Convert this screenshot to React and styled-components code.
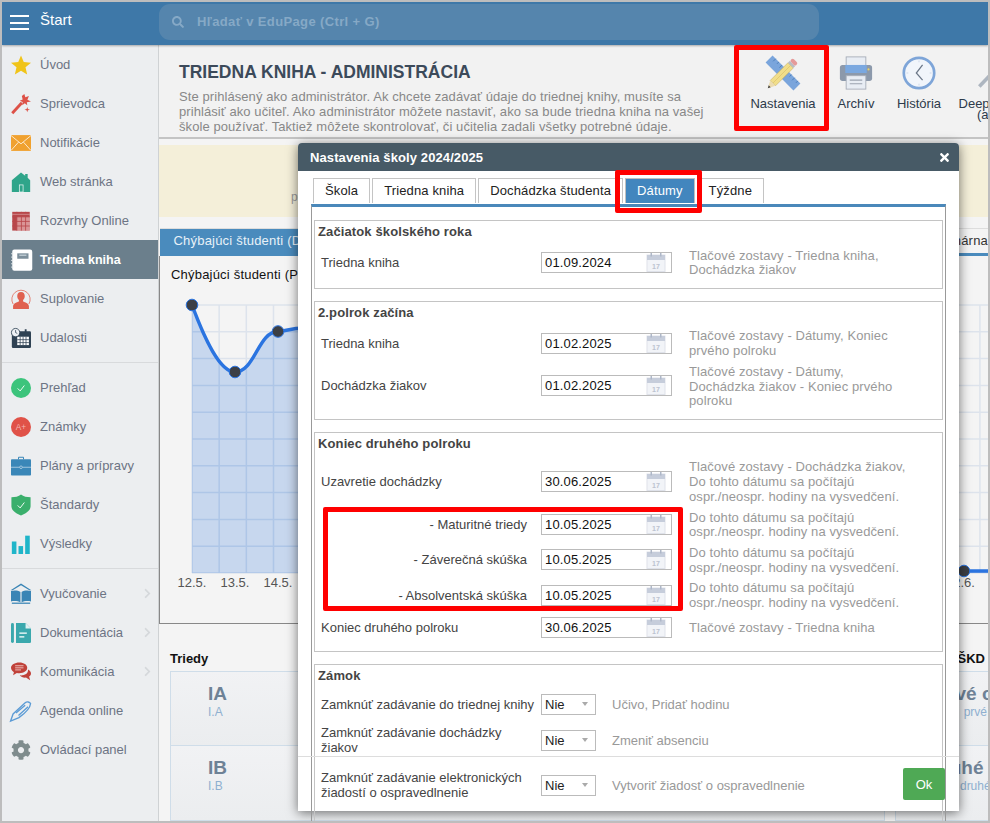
import React from "react";
import styled, { createGlobalStyle } from "styled-components";
import { FaSearch, FaTimes, FaCog, FaChevronRight } from "react-icons/fa";

const Global = createGlobalStyle`
  html, body { margin: 0; padding: 0; background: #fff; }
  * { box-sizing: border-box; }
  body { font-family: "Liberation Sans", Arial, sans-serif; }
`;

const Screen = styled.div`
  position: relative; width: 990px; height: 823px; border: 2px solid #bdbdbd;
  overflow: hidden; background: #f4f4f4; display: flex; flex-direction: column;
`;
const TopBar = styled.header`
  height: 43px; flex: none; background: #3e78a8; display: flex; align-items: center;
  padding-left: 8px; position: relative; z-index: 2; box-shadow: 0 1px 2px rgba(0,0,0,.3);
`;
const Burger = styled.div`
  width: 19px; height: 15px; display: flex; flex-direction: column; justify-content: space-between; margin: -2px 11px 0 0;
  i { display: block; height: 2px; background: #fff; }
`;
const StartLabel = styled.span`
  color: #fff; font-size: 15px; width: 119px; margin-top: -8px;
`;
const SearchBox = styled.div`
  width: 660px; height: 36px; background: #5585ad; border-radius: 11px; display: flex; align-items: center;
  padding-left: 13px; gap: 13px; color: #86a9c6; font-size: 13px; letter-spacing: .37px; font-weight: 700; margin-top: -4px;
`;
const Body = styled.div`
  flex: 1; display: flex; min-height: 0;
`;
const Sidebar = styled.nav`
  width: 157px; flex: none; background: #eceef0; border-right: 1px solid #cfd2d4;
`;
const NavGroup = styled.div`
  padding: ${p => (p.$first ? "0 0 5px" : "5px 0")};
  border-bottom: ${p => (p.$last ? "none" : "1px solid #d8dadc")};
`;
const NavItem = styled.div`
  height: 39px; display: flex; align-items: center; padding-left: 9px; gap: 9px; position: relative;
  background: ${p => (p.$active ? "#6b7f8c" : "transparent")};
  color: ${p => (p.$active ? "#fff" : "#6d7484")};
  font-weight: ${p => (p.$active ? 700 : 400)};
  font-size: ${p => (p.$active ? "12.5px" : "13px")};
  svg.ic { width: 20px; height: 20px; flex: none; overflow: visible; }
`;
const Chevron = styled.span`
  position: absolute; right: 5px; top: 14px; color: #d5d8db; font-size: 11px; line-height: 1;
`;
const Main = styled.main`
  flex: 1; min-width: 0; display: flex; flex-direction: column; overflow: hidden;
`;
const PageHead = styled.section`
  height: 94px; flex: none; display: flex; background: #f2f2f2; border-bottom: 2px solid #c4c4c4; padding-left: 20px;
`;
const HeadText = styled.div`
  width: 568px; flex: none; padding-top: 17px;
`;
const PageTitle = styled.h1`
  margin: 0 0 7px; font-size: 17.5px; line-height: 20px; font-weight: 700; color: #3c4a5a;
`;
const PageDesc = styled.p`
  margin: 0; font-size: 13px; line-height: 15px; color: #888; letter-spacing: .08px; white-space: nowrap;
`;
const Toolbar = styled.div`
  display: flex; flex: none;
`;
const ToolItem = styled.div`
  width: ${p => p.$w}px; flex: none; display: flex; flex-direction: column; align-items: center; padding-top: 11px;
  font-size: 13px; line-height: 11px; color: #2d3a4a; text-align: center; white-space: nowrap;
  svg { width: 34px; height: 34px; margin-bottom: 8px; flex: none; overflow: visible; }
`;
const Banner = styled.div`
  height: 72px; flex: none; margin-top: 6px; background: #f4efd9; padding: 45px 0 0 132px; font-size: 12px; color: #999;
  white-space: nowrap; overflow: hidden;
`;
const TabRow = styled.div`
  height: 28px; flex: none; margin-top: 11px; display: flex; justify-content: space-between; border-top: 1px solid #ddd;
  border-bottom: 3px solid #4a8bbd; margin-left: 1px; font-size: 13px; letter-spacing: .2px;
`;
const ChartTab = styled.div`
  background: #4a8bbd; color: #e8f1f8; padding: 0 14px 0 13.5px; width: 300px; white-space: nowrap; overflow: hidden; line-height: 24px;
`;
const ChartTabRight = styled.div`
  color: #333; line-height: 24px; white-space: nowrap; width: 30px; overflow: hidden; text-align: right; direction: rtl;
`;
const ChartCard = styled.div`
  height: 368px; flex: none; border-left: 1px solid #888; border-bottom: 1px solid #888;
  svg { display: block; }
`;
const ChartTitle = styled.div`
  height: 34px; padding: 11px 0 0 11px; font-size: 13px; letter-spacing: .2px; line-height: 15px; color: #111; white-space: nowrap;
`;
const Lower = styled.div`
  flex: 1; display: flex; padding-left: 11px; gap: 10px; margin: 26px -135px 0 0; min-height: 0;
`;
const LowerCol = styled.div`
  flex: ${p => (p.$wide ? "1" : "none")}; width: ${p => (p.$wide ? "auto" : "228px")}; min-width: 0;
`;
const LowerTitle = styled.div`
  font-size: 13px; font-weight: 700; color: #111; line-height: 15px; height: 21px; padding-top: 1px; white-space: nowrap;
  margin-left: ${p => p.$shift || 0}px;
`;
const ClassCard = styled.div`
  height: 75px; border: 1px solid #cfdde9; border-top: ${p => (p.$first ? "1px solid #cfdde9" : "none")};
  background: linear-gradient(#f1f2f4, #ebedef); padding: 11px ${p => p.$padR || 0}px 0 ${p => p.$pad || 0}px; white-space: nowrap;
  text-align: ${p => (p.$center ? "center" : "left")};
`;
const ClassName = styled.div`
  font-size: 19px; line-height: 21px; font-weight: 700; color: #6e8296;
`;
const ClassSub = styled.div`
  font-size: 12px; line-height: 15px; color: #8fb0d0; margin-top: 1px;
`;

const Modal = styled.div`
  position: absolute; left: 296px; top: 141px; width: 661px; height: 668px; background: #fff; border-radius: 4px 4px 0 0;
  box-shadow: 0 2px 12px rgba(0,0,0,.55); z-index: 5; display: flex; flex-direction: column;
`;
const ModalHead = styled.div`
  height: 28px; flex: none; background: #475a66; border-radius: 4px 4px 0 0; display: flex; align-items: center; justify-content: space-between;
  padding: 0 8px 0 12px; color: #fff; font-weight: 700; font-size: 13px; letter-spacing: .1px;
`;
const Tabs = styled.div`
  display: flex; gap: 2px; padding: 7px 0 0 15px; flex: none;
`;
const Tab = styled.div`
  height: 25px; padding: 0 11px; line-height: 23px; font-size: 13px; letter-spacing: .13px; color: ${p => (p.$active ? "#fff" : "#222")};
  background: ${p => (p.$active ? "#4286be" : "#fff")}; border: 1px solid ${p => (p.$active ? "#c0c0c0" : "#c4c4c4")}; border-bottom: none; white-space: nowrap;
`;
const Frame = styled.div`
  margin: 1px 0 0 13px; width: 635px; height: 700px; flex: none; border: 1px solid #999; border-top: 3px solid #4a88ba; padding: 13px 2px 0;
  display: flex; flex-direction: column; gap: 12px;
`;
const Section = styled.section`
  border: 1px solid #c4c4c4; padding: 0 0 ${p => (p.$open ? "0" : "8px")};
  ${p => (p.$open ? "flex: 1;" : "")}
`;
const SectionTitle = styled.h3`
  margin: 0; height: 23.5px; padding: 3px 0 0 3px; font-size: 13px; letter-spacing: .12px; line-height: 15px; font-weight: 700; color: #444;
`;
const Row = styled.div`
  display: flex; align-items: center; padding: 3px 0 3px 6px; min-height: 30px;
`;
const RowLabel = styled.div`
  width: 220px; flex: none; font-size: 13px; line-height: 15px; color: #444;
  text-align: ${p => (p.$indent ? "right" : "left")}; padding-right: ${p => (p.$indent ? "14px" : "0")};
`;
const DateBox = styled.div`
  width: 131px; height: 21px; flex: none; background: #fff; border: 1px solid #bbb; display: flex; align-items: center; justify-content: space-between;
  padding: 0 5px 0 3px; font-size: 13px; letter-spacing: .15px; color: #111;
  svg { width: 20px; height: 19px; }
`;
const Note = styled.div`
  margin: 1px 0 -1px 17px; width: 235px; font-size: 13px; line-height: 14.7px; color: #999; letter-spacing: .1px;
`;
const LockRow = styled.div`
  display: flex; align-items: center; padding: 0 0 0 6px; height: ${p => p.$h}px; margin-top: ${p => p.$mt || 0}px;
`;
const SelectBox = styled.div`
  width: 55px; height: 21px; flex: none; border: 1px solid #bbb; background: #fff; display: flex; align-items: center; justify-content: space-between;
  padding: 0 7px 0 3px; font-size: 13px; color: #222;
  i { display: block; width: 0; height: 0; border: 3.5px solid transparent; border-top: 4px solid #aaa; border-bottom: none; }
`;
const LockNote = styled.div`
  margin-left: 16px; font-size: 13px; color: #999; white-space: nowrap;
`;
const FooterLine = styled.div`
  position: absolute; left: 0; right: 0; top: 613px; height: 1px; background: #ddd;
`;
const OkButton = styled.button`
  position: absolute; left: 605px; top: 625px; width: 42px; height: 32px; border: none; border-radius: 2px; background: #4fa955; color: #fff;
  font: 13px "Liberation Sans", Arial, sans-serif; padding: 0;
`;
const Callout = styled.div`
  position: absolute; left: ${p => p.$x}px; top: ${p => p.$y}px; width: ${p => p.$w}px; height: ${p => p.$h}px;
  border: 5px solid #f00; border-radius: 2px; z-index: 8; pointer-events: none;
`;

/* ---------- icons ---------- */
const Ic = ({ children }) => <svg className="ic" viewBox="0 0 24 24">{children}</svg>;
const check = <path d="M8 12.500l3 3 5-6.500" fill="none" stroke="#fff" strokeWidth="1.100" />;
const icons = {
  star: <Ic><polygon fill="#f0c419" points="12,.500 15.300,8.500 24,9.200 17.400,14.800 19.400,23.400 12,18.800 4.600,23.400 6.600,14.800 0,9.200 8.700,8.500" /></Ic>,
  wand: <Ic><path d="M1.500 23L13 10.500" stroke="#dd5147" strokeWidth="3.400" /><polygon fill="#dd5147" points="16,0 17.200,4 21.500,2.500 19.700,7 24,9 19,10 19.500,13.500 16.500,11 13.500,13.500 14,9.500 10.500,8 14,6.500 13,2.500" /><polygon fill="#dd5147" points="19.500,15.500 20.300,18 22.800,18.800 20.300,19.600 19.500,22 18.700,19.600 16.200,18.800 18.700,18" /></Ic>,
  mail: <Ic><rect x="0" y="2.500" width="24" height="19" fill="#f0a12f" /><path d="M0 3l12 10L24 3M0 21l9-10M24 21l-9-10" stroke="#fff" strokeWidth=".9" fill="none" /></Ic>,
  home: <Ic><path d="M12 .500L17 4.500V2.500h3v4.500l3 3V24H1V10z" fill="#2fa58a" /><rect x="10" y="15.500" width="4.500" height="8.500" fill="none" stroke="#e8f5f2" strokeWidth=".9" /></Ic>,
  grid: <Ic><rect x="1.500" y="1" width="21" height="22.500" fill="#b8474a" /><rect x="7" y="7" width="15.500" height="16.500" fill="#f0c9c9" opacity=".6" /><path d="M1.500 7h21M1.500 12.500h21M1.500 18h21M7 1v22.500M12.500 1v22.500M17.500 1v22.500" stroke="#b8474a" strokeWidth="1" /><path d="M1.500 4h21" stroke="#e8c4c4" strokeWidth=".6" /></Ic>,
  book: <Ic><rect x="1.500" y="-.500" width="24" height="25.500" rx="2.500" fill="#fff" /><rect x="7.500" y="4" width="13.500" height="6.500" fill="#7d8f9b" /><rect x="10" y="5.500" width="8.500" height="1.500" fill="#c7d2d9" /><path d="M0 4.500h3M0 8.500h3M0 12.500h3M0 16.500h3M0 20.500h3" stroke="#e8ecee" strokeWidth="1" /></Ic>,
  person: <Ic><path d="M2.500 18A11 11 0 1 1 21.500 18" fill="none" stroke="#e0604f" strokeWidth=".9" /><path d="M12 3.500c3.200 0 4.700 2.400 4.500 5.200-.1 2-.9 3.500-2 4.500v1.800c2.500 1 6.500 1.800 7 5.500v3.500H2.500V20.500c.5-3.700 4.500-4.500 7-5.500v-1.800c-1.100-1-1.900-2.500-2-4.500C7.300 5.900 8.800 3.500 12 3.500z" fill="#e0604f" /></Ic>,
  cal: <Ic><rect x="1" y="4" width="23" height="20" rx="1.500" fill="#2f4253" /><rect x="16.500" y="1.500" width="2.200" height="4" fill="#2f4253" /><rect x="7.500" y="10.500" width="14" height="10" fill="#fff" /><path d="M7.500 14h14M7.500 17.500h14M11 10.500v10M14.500 10.500v10M18 10.500v10" stroke="#2f4253" strokeWidth=".9" /><circle cx="5.500" cy="5.500" r="5" fill="#eef1f4" stroke="#2f4253" strokeWidth="1" /><path d="M5.500 2.500v3l2 1" stroke="#2f4253" strokeWidth=".9" fill="none" /></Ic>,
  ok: <Ic><circle cx="12" cy="12" r="12" fill="#3cc47c" />{check}</Ic>,
  grade: <Ic><circle cx="12" cy="12" r="12" fill="#e05248" /><text x="12" y="15.500" textAnchor="middle" fontSize="10" fill="#f4b7b1" fontFamily="Liberation Sans">A+</text></Ic>,
  case: <Ic><path d="M9 4V1.500h6V4" fill="none" stroke="#3a87b8" strokeWidth="1.200" /><rect x="0" y="4" width="24" height="19.500" rx="1" fill="#3a87b8" /><path d="M0 13.500h24" stroke="#d4e6f2" strokeWidth=".8" /><circle cx="12" cy="13.500" r="1.600" fill="#3a87b8" stroke="#d4e6f2" strokeWidth=".7" /></Ic>,
  shield: <Ic><path d="M12 -.500c3 2.400 7 3.300 11.500 3.300v11c0 4.500-5.500 8.500-11.500 10.700C6 22.300.500 18.300.500 13.800v-11C5 2.800 9 1.900 12 -.500z" fill="#3aaf6c" />{check}</Ic>,
  bars: <Ic><rect x="1" y="9" width="5.500" height="15" fill="#1fb5c9" /><rect x="9" y="14.500" width="5.500" height="9.500" fill="#1fb5c9" /><rect x="17" y="2" width="5.500" height="22" fill="#1fb5c9" /></Ic>,
  learn: <Ic><path d="M12 -.500L-.500 7.500h2.500L12 1.500l10 6h2.500z" fill="#3a85b5" /><path d="M0 8.500c4-1.200 8.500-.6 11.300 1v12.500C8.500 20.500 4 20 0 21zM24 8.500c-4-1.200-8.500-.6-11.300 1v12.500c2.800-1.500 7.300-2 11.300-1z" fill="#3a85b5" /><rect x="1" y="22.300" width="22" height="1.500" fill="#3a85b5" /></Ic>,
  doc: <Ic><rect x="0" y="0" width="3.500" height="24" rx="1.700" fill="#3aa8ad" /><path d="M6 0h11.500L24 6.500V22.500a1.500 1.500 0 0 1-1.500 1.500H6z" fill="#3aa8ad" /><path d="M17.500 0v6.500H24z" fill="#dff1f2" /><path d="M10 12h9M10 16.500h6" stroke="#fff" strokeWidth="1.500" /></Ic>,
  chat: <Ic><path d="M10 .500c5.500 0 9.500 2.800 9.500 6.500S15.500 13.500 10 13.500c-1 0-2-.1-3-.3L2.500 16l1-3.800C1.500 11 0 9.100 0 7 0 3.300 4.500 .500 10 .500z" fill="#c0423a" /><path d="M5 4.500h10M5 7h10M5 9.500h7" stroke="#f5d5d2" strokeWidth="1" /><path d="M20.500 9c2 1 3.500 2.800 3.500 4.800 0 1.500-.9 2.800-2.300 3.700l1.300 4.500-5-3.300c-3 .3-6-.6-7.500-2.700 5.500.5 10-1.500 10-7z" fill="#c0423a" /></Ic>,
  pen: <Ic><path d="M-.500 24l3-8.500L17 2c2-1.500 5.500-1 6.500 1 -.5 6-7 12-14 17z" fill="none" stroke="#5b9bd5" strokeWidth="1.600" /><path d="M6 14.500L17 5M9 17.500L20.500 7" stroke="#5b9bd5" strokeWidth="1.600" /></Ic>,
};

const groups = [
  [["star", "Úvod"], ["wand", "Sprievodca"], ["mail", "Notifikácie"], ["home", "Web stránka"], ["grid", "Rozvrhy Online"], ["book", "Triedna kniha", true], ["person", "Suplovanie"], ["cal", "Udalosti"]],
  [["ok", "Prehľad"], ["grade", "Známky"], ["case", "Plány a prípravy"], ["shield", "Štandardy"], ["bars", "Výsledky"]],
  [["learn", "Vyučovanie", false, true], ["doc", "Dokumentácia", false, true], ["chat", "Komunikácia", false, true], ["pen", "Agenda online"], ["gear", "Ovládací panel"]],
];

const CalIcon = () => (
  <svg viewBox="0 0 20 19">
    <rect x="1" y="2" width="18" height="16.500" fill="#f2f4f8" stroke="#dfe2ea" />
    <rect x="1" y="2" width="18" height="5" fill="#c6cddb" />
    <rect x="4.500" y="0" width="1.500" height="3.500" fill="#aeb7c8" />
    <rect x="14" y="0" width="1.500" height="3.500" fill="#aeb7c8" />
    <text x="10" y="15.500" textAnchor="middle" fontSize="7" fontWeight="700" fill="#bcc3d0" fontFamily="Liberation Sans">17</text>
  </svg>
);

/* ---------- chart ---------- */
const CURVE = "M32 15C45 50 60 82 75 82C95 82 98 41.500 118 41.500C125 41.500 130 38 145 38C300 38 500 120 640 200C720 250 770 281 804 281L830 281";
const vLines = Array.from({ length: 30 }, (_, i) => 32 + 27.17 * i);
const hLines = Array.from({ length: 11 }, (_, i) => 15 + 26.8 * i);
const gridPath = vLines.map(x => `M${x} 15V283`).join("") + hLines.map(y => `M32 ${y}H830`).join("");

const Chart = () => (
  <svg width="830" height="301" viewBox="0 0 830 301">
    <defs>
      <clipPath id="areaClip"><path d={`${CURVE}L830 283H32Z`} /></clipPath>
    </defs>
    <path d={gridPath} stroke="#dde3ec" strokeWidth="1.500" fill="none" />
    <path d={`${CURVE}L830 283H32Z`} fill="#c7d7ee" />
    <path d={gridPath} stroke="#aec6e7" strokeWidth="1.500" fill="none" clipPath="url(#areaClip)" />
    <path d={CURVE} stroke="#2b74e0" strokeWidth="3.500" fill="none" />
    {[[32, 15], [75, 82], [118, 41.5], [804, 281]].map(([x, y]) => (
      <circle key={x} cx={x} cy={y} r="5.800" fill="#3c3f45" stroke="#2b74e0" strokeWidth="1" />
    ))}
    {[[32, "12.5."], [75, "13.5."], [118, "14.5."], [804, "2.6."]].map(([x, t]) => (
      <text key={x} x={x} y="297" textAnchor="middle" fontSize="13" fill="#555" fontFamily="Liberation Sans">{t}</text>
    ))}
  </svg>
);

const RulerPencil = () => (
  <svg viewBox="0 0 38 38">
    <g transform="rotate(45 19 19)">
      <rect x="-3" y="13.500" width="44" height="11" fill="#7aa5dc" />
      <path d="M2 13.500v4M7 13.500v3M12 13.500v4M17 13.500v3M22 13.500v4M27 13.500v3M32 13.500v4M37 13.500v3" stroke="#4778b4" strokeWidth=".9" />
    </g>
    <g transform="rotate(-45 19 19)">
      <rect x="3" y="14.800" width="28" height="8.400" fill="#f1de8a" stroke="#b8a253" strokeWidth=".5" />
      <path d="M3 19h28" stroke="#d9c067" strokeWidth=".7" />
      <rect x="31" y="14.800" width="3" height="8.400" fill="#b9bcc2" />
      <rect x="34" y="14.800" width="4.500" height="8.400" rx="2" fill="#e59a9a" />
      <polygon points="3,14.800 3,23.200 -5,19" fill="#ecdcb0" />
      <polygon points="-2,17.400 -2,20.600 -5,19" fill="#444" />
    </g>
  </svg>
);
const Printer = () => (
  <svg viewBox="0 0 38 38">
    <rect x="8" y="1" width="22" height="12" fill="#e8edf4" stroke="#a6adb8" />
    <rect x="1" y="10" width="36" height="18" rx="3" fill="#8c99ab" />
    <rect x="7" y="10" width="24" height="9" fill="#7aa8e0" />
    <circle cx="33" cy="15" r="1.200" fill="#e7d36a" />
    <rect x="8" y="22" width="22" height="15" fill="#e8edf4" stroke="#a6adb8" />
    <path d="M12 27h14M12 31h14" stroke="#9aa3af" strokeWidth="1.300" />
  </svg>
);
const ClockIcon = () => (
  <svg viewBox="0 0 38 38">
    <circle cx="19" cy="19" r="17" fill="#f1f5fb" stroke="#7ea5d8" strokeWidth="3" />
    <path d="M23 10l-7 9 7 8" fill="none" stroke="#6b7788" strokeWidth="1.400" />
    <path d="M19 5v2M19 31v2M5 19h2M31 19h2" stroke="#c9d5e6" strokeWidth="1" />
  </svg>
);
const DeepIcon = () => (
  <svg viewBox="0 0 38 38">
    <path d="M19 11L-3 34" stroke="#aeb6c0" strokeWidth="4" />
    <path d="M19 11l8-9M14 8l6 6" stroke="#aeb6c0" strokeWidth="2" />
    <circle cx="24" cy="9" r="7" fill="none" stroke="#aeb6c0" strokeWidth="2" />
  </svg>
);

const DateRow = ({ label, value, note, indent }) => (
  <Row>
    <RowLabel $indent={indent}>{label}</RowLabel>
    <DateBox>{value}<CalIcon /></DateBox>
    <Note>{note}</Note>
  </Row>
);
const Lock = ({ label, note, h, mt }) => (
  <LockRow $h={h} $mt={mt}>
    <RowLabel>{label}</RowLabel>
    <SelectBox>Nie<i /></SelectBox>
    <LockNote>{note}</LockNote>
  </LockRow>
);

const sanction = <>Do tohto dátumu sa počítajú<br />ospr./neospr. hodiny na vysvedčení.</>;

export default function App() {
  return (
    <>
      <Global />
      <Screen>
        <TopBar>
          <Burger><i /><i /><i /></Burger>
          <StartLabel>Štart</StartLabel>
          <SearchBox><FaSearch size={12} />Hľadať v EduPage (Ctrl + G)</SearchBox>
        </TopBar>
        <Body>
          <Sidebar>
            {groups.map((g, gi) => (
              <NavGroup key={gi} $first={gi === 0} $last={gi === 2}>
                {g.map(([ic, t, active, more]) => (
                  <NavItem key={t} $active={active}>
                    {ic === "gear" ? <FaCog className="ic" color="#7f8c8d" /> : icons[ic]}
                    {t}
                    {more && <Chevron><FaChevronRight /></Chevron>}
                  </NavItem>
                ))}
              </NavGroup>
            ))}
          </Sidebar>
          <Main>
            <PageHead>
              <HeadText>
                <PageTitle>TRIEDNA KNIHA - ADMINISTRÁCIA</PageTitle>
                <PageDesc>
                  Ste prihlásený ako administrátor. Ak chcete zadávať údaje do triednej knihy, musíte sa<br />
                  prihlásiť ako učiteľ. Ako administrátor môžete nastaviť, ako sa bude triedna kniha na vašej<br />
                  škole používať. Taktiež môžete skontrolovať, či učitelia zadali všetky potrebné údaje.
                </PageDesc>
              </HeadText>
              <Toolbar>
                <ToolItem $w={72}><RulerPencil />Nastavenia</ToolItem>
                <ToolItem $w={74}><Printer />Archív</ToolItem>
                <ToolItem $w={52}><ClockIcon />História</ToolItem>
                <ToolItem $w={108}><DeepIcon />Deep learning<br />(admin)</ToolItem>
              </Toolbar>
            </PageHead>
            <Banner>pre školský rok</Banner>
            <TabRow>
              <ChartTab>Chýbajúci študenti (Dochádzka)</ChartTab>
              <ChartTabRight>nárna</ChartTabRight>
            </TabRow>
            <ChartCard>
              <ChartTitle>Chýbajúci študenti (Počet)</ChartTitle>
              <Chart />
            </ChartCard>
            <Lower>
              <LowerCol $wide>
                <LowerTitle>Triedy</LowerTitle>
                <ClassCard $first $pad={37}><ClassName>IA</ClassName><ClassSub>I.A</ClassSub></ClassCard>
                <ClassCard $pad={37}><ClassName>IB</ClassName><ClassSub>I.B</ClassSub></ClassCard>
              </LowerCol>
              <LowerCol>
                <LowerTitle $shift={-4}>Oddelenia ŠKD</LowerTitle>
                <ClassCard $first $center $padR={12}><ClassName>Prvé oddelenie</ClassName><ClassSub>prvé oddelenie</ClassSub></ClassCard>
                <ClassCard $center $padR={12}><ClassName>Druhé oddelenie</ClassName><ClassSub>druhé oddelenie</ClassSub></ClassCard>
              </LowerCol>
            </Lower>
          </Main>
        </Body>

        <Modal>
          <ModalHead>Nastavenia školy 2024/2025<FaTimes size={13} /></ModalHead>
          <Tabs>
            <Tab>Škola</Tab>
            <Tab>Triedna kniha</Tab>
            <Tab>Dochádzka študenta</Tab>
            <Tab $active>Dátumy</Tab>
            <Tab>Týždne</Tab>
          </Tabs>
          <Frame>
            <Section>
              <SectionTitle>Začiatok školského roka</SectionTitle>
              <DateRow label="Triedna kniha" value="01.09.2024" note={<>Tlačové zostavy - Triedna kniha,<br />Dochádzka žiakov</>} />
            </Section>
            <Section>
              <SectionTitle>2.polrok začína</SectionTitle>
              <DateRow label="Triedna kniha" value="01.02.2025" note={<>Tlačové zostavy - Dátumy, Koniec<br />prvého polroku</>} />
              <DateRow label="Dochádzka žiakov" value="01.02.2025" note={<>Tlačové zostavy - Dátumy,<br />Dochádzka žiakov - Koniec prvého<br />polroku</>} />
            </Section>
            <Section>
              <SectionTitle>Koniec druhého polroku</SectionTitle>
              <DateRow label="Uzavretie dochádzky" value="30.06.2025" note={<>Tlačové zostavy - Dochádzka žiakov,<br />Do tohto dátumu sa počítajú<br />ospr./neospr. hodiny na vysvedčení.</>} />
              <DateRow indent label="- Maturitné triedy" value="10.05.2025" note={sanction} />
              <DateRow indent label="- Záverečná skúška" value="10.05.2025" note={sanction} />
              <DateRow indent label="- Absolventská skúška" value="10.05.2025" note={sanction} />
              <DateRow label="Koniec druhého polroku" value="30.06.2025" note="Tlačové zostavy - Triedna kniha" />
            </Section>
            <Section $open>
              <SectionTitle>Zámok</SectionTitle>
              <Lock h={32} label="Zamknúť zadávanie do triednej knihy" note="Učivo, Pridať hodinu" />
              <Lock h={40} label={<>Zamknúť zadávanie dochádzky<br />žiakov</>} note="Zmeniť absenciu" />
              <Lock h={40} mt={5} label={<>Zamknúť zadávanie elektronických<br />žiadostí o ospravedlnenie</>} note="Vytvoriť žiadosť o ospravedlnenie" />
            </Section>
          </Frame>
          <FooterLine />
          <OkButton>Ok</OkButton>
        </Modal>

        <Callout $x={732} $y={43} $w={95} $h={86} />
        <Callout $x={613} $y={168} $w={87} $h={43} />
        <Callout $x={321} $y={505} $w={360} $h={104} />
      </Screen>
    </>
  );
}
